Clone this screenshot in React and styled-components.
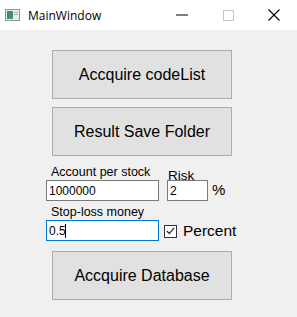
import React from 'react';
import styled, { createGlobalStyle } from 'styled-components';

const Global = createGlobalStyle`
  html, body {
    margin: 0;
    padding: 0;
    background: #f0f0f0;
  }
  body {
    width: 297px;
    height: 317px;
    overflow: hidden;
    font-family: "Liberation Sans", Arial, sans-serif;
  }
`

const Window = styled.div`
  display: flex;
  flex-direction: column;
  width: 297px;
  height: 317px;
  background: #f0f0f0;
`

const TitleBar = styled.div`
  display: flex;
  align-items: center;
  height: 30px;
  background: #ffffff;
  flex-shrink: 0;
`

const Title = styled.span`
  margin-left: 8px;
  font-family: "Open Sans", "Noto Sans", sans-serif;
  font-size: 12px;
  color: #000;
  flex: 1;
`

const Caption = styled.div`
  display: flex;
  justify-content: center;
  align-items: center;
  width: 46px;
  height: 30px;
`

const Content = styled.div`
  display: flex;
  flex-direction: column;
  padding: 20px 0 0 46px;
`

const PushButton = styled.button`
  display: flex;
  justify-content: center;
  align-items: center;
  box-sizing: border-box;
  width: 180px;
  height: 49px;
  margin-left: 6px;
  margin-bottom: ${p => p.gap || 0}px;
  padding: 0;
  border: 1px solid #adadad;
  background: #e1e1e1;
  font-family: "Liberation Sans", Arial, sans-serif;
  font-size: 16px;
  color: #000;
`

const Row = styled.div`
  display: flex;
  align-items: flex-end;
  margin-bottom: ${p => p.gap || 0}px;
`

const Column = styled.div`
  display: flex;
  flex-direction: column;
  margin-left: ${p => p.offset || 0}px;
`

const Label = styled.span`
  margin-left: ${p => p.indent || 0}px;
  margin-bottom: ${p => (p.low ? -2 : 1)}px;
  font-size: ${p => (p.low ? 13.5 : 12.5)}px;
  line-height: 13px;
  color: #000;
`

const LineEdit = styled.div`
  display: flex;
  align-items: center;
  box-sizing: border-box;
  width: ${p => p.w}px;
  height: 21px;
  padding-left: 2px;
  background: #fff;
  border: 1px solid ${p => (p.focused ? '#0078d7' : '#7a7a7a')};
  font-size: 12px;
  color: #000;
`

const Caret = styled.span`
  display: inline-block;
  width: 1px;
  height: 14px;
  background: #000;
  margin-left: -1px;
`

const Suffix = styled.span`
  margin-left: 4px;
  margin-bottom: 1px;
  font-size: 15px;
  line-height: 20px;
`

const CheckBox = styled.div`
  display: flex;
  align-items: center;
  margin-left: 5px;
  margin-bottom: 1px;
`

const Box = styled.div`
  display: flex;
  justify-content: center;
  align-items: center;
  box-sizing: border-box;
  width: 13px;
  height: 13px;
  background: #fff;
  border: 1px solid #333;
`

const CheckText = styled.span`
  margin-left: 6px;
  font-size: 15.5px;
  line-height: 18px;
`

function AppIcon() {
  return (
    <svg width="15" height="12" viewBox="0 0 15 12" style={{ marginLeft: 5 }}>
      <rect x="0.5" y="0.5" width="14" height="11" fill="#e8ecec" stroke="#8c9696" />
      <rect x="2" y="2" width="6" height="8" fill="#3f8f78" />
      <rect x="9" y="3" width="4" height="1" fill="#aab4b4" />
      <rect x="9" y="5" width="4" height="1" fill="#aab4b4" />
    </svg>
  );
}

export default function App() {
  return (
    <Window>
      <Global />
      <TitleBar>
        <AppIcon />
        <Title>MainWindow</Title>
        <Caption>
          <svg width="12" height="2" viewBox="0 0 12 2"><rect x="0" y="0.5" width="12" height="1" fill="#000" /></svg>
        </Caption>
        <Caption>
          <svg width="11" height="11" viewBox="0 0 11 11"><rect x="0.5" y="0.5" width="10" height="10" fill="none" stroke="#c4c4c4" /></svg>
        </Caption>
        <Caption>
          <svg width="12" height="12" viewBox="0 0 12 12">
            <path d="M0.5 0.5 L11.5 11.5 M11.5 0.5 L0.5 11.5" stroke="#000" strokeWidth="1.1" />
          </svg>
        </Caption>
      </TitleBar>
      <Content>
        <PushButton gap={8}>Accquire codeList</PushButton>
        <PushButton gap={10}>Result Save Folder</PushButton>
        <Row gap={5}>
          <Column>
            <Label indent={5}>Account per stock</Label>
            <LineEdit w={113}>1000000</LineEdit>
          </Column>
          <Column offset={8}>
            <Label indent={1} low>Risk</Label>
            <Row>
              <LineEdit w={41}>2</LineEdit>
              <Suffix>%</Suffix>
            </Row>
          </Column>
        </Row>
        <Row gap={10}>
          <Column>
            <Label indent={5}>Stop-loss money</Label>
            <LineEdit w={113} focused>0.5<Caret /></LineEdit>
          </Column>
          <CheckBox>
            <Box>
              <svg width="9" height="8" viewBox="0 0 9 8"><path d="M0.8 4 L3.3 6.5 L8.2 0.8" fill="none" stroke="#333" strokeWidth="1.2" /></svg>
            </Box>
            <CheckText>Percent</CheckText>
          </CheckBox>
        </Row>
        <PushButton>Accquire Database</PushButton>
      </Content>
    </Window>
  );
}
